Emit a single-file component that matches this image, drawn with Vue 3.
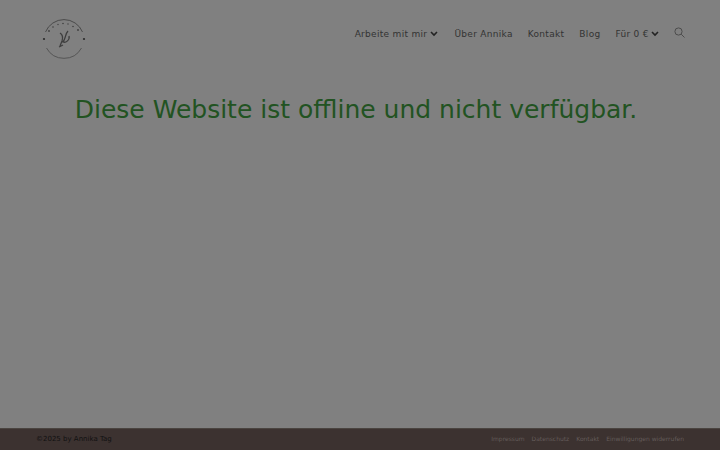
<template>
  <div class="page">
    <header class="top">
      <svg class="logo" width="44" height="44" viewBox="0 0 44 44">
        <path d="M3.5 15 A20 20 0 0 1 40.5 15" fill="none" stroke="#444" stroke-width="0.9" />
        <path d="M4.5 31 A20 20 0 0 0 39.5 31" fill="none" stroke="#505050" stroke-width="0.9" />
        <circle cx="2" cy="22" r="1.1" fill="#2a2a2a" />
        <circle cx="42" cy="22" r="1.1" fill="#2a2a2a" />
        <g fill="#3e3e3e">
          <circle cx="7" cy="14" r="0.9" />
          <circle cx="11" cy="10" r="0.8" />
          <circle cx="16" cy="7.5" r="0.7" />
          <circle cx="21" cy="6.5" r="0.8" />
          <circle cx="26" cy="7" r="0.7" />
          <circle cx="31" cy="9.5" r="0.8" />
          <circle cx="36" cy="13" r="0.9" />
        </g>
        <path d="M18 16 C21 18 21 21 20 24 L18 29 M26 14 C23 17 24 21 21 25 C24 26 28 23 27 19 M17 30 L21 28" fill="none" stroke="#3e3e3e" stroke-width="1.3" />
      </svg>
      <nav class="menu">
        <a class="first">Arbeite mit mir <svg width="8" height="6" viewBox="0 0 8 6"><path d="M1 1 L4 4 L7 1" fill="none" stroke="#222" stroke-width="1.6" /></svg></a>
        <a>Über Annika</a>
        <a>Kontakt</a>
        <a>Blog</a>
        <a>Für 0 € <svg width="8" height="6" viewBox="0 0 8 6"><path d="M1 1 L4 4 L7 1" fill="none" stroke="#222" stroke-width="1.6" /></svg></a>
        <svg class="search" width="11" height="11" viewBox="0 0 11 11"><circle cx="4.5" cy="4.5" r="3.6" fill="none" stroke="#4c4c4c" /><path d="M7.2 7.2 L10.5 10.5" stroke="#4c4c4c" /></svg>
      </nav>
    </header>
    <main class="content">
      <h1>Diese Website ist offline und nicht verfügbar.</h1>
    </main>
    <footer class="bottom">
      <span class="copy">©2025 by Annika Tag</span>
      <div class="links">
        <a>Impressum</a>
        <a>Datenschutz</a>
        <a>Kontakt</a>
        <a>Einwilligungen widerrufen</a>
      </div>
    </footer>
  </div>
</template>

<script setup>
</script>

<style>
html, body {
  margin: 0;
  background: #808080;
}
</style>

<style scoped>
.page {
  height: 450px;
  display: flex;
  flex-direction: column;
  font-family: "DejaVu Sans", sans-serif;
  background: #808080;
}
.top {
  height: 74px;
  display: flex;
  justify-content: space-between;
  padding: 0 35px 0 42px;
  box-sizing: border-box;
}
.logo {
  margin-top: 17px;
}
.menu {
  display: flex;
  align-items: center;
  gap: 15px;
  height: 67px;
  font-size: 9px;
  letter-spacing: 0.3px;
  color: #333;
  opacity: 0.99;
}
.menu a svg {
  margin-left: -1px;
}
.menu a.first {
  margin-right: 1px;
}
.menu a.first svg {
  margin-left: 0;
}
.search {
  margin-top: -3px;
}
.content {
  flex: 1;
  text-align: center;
}
h1 {
  margin: 21px 0 0 -8px;
  font-size: 25px;
  font-weight: 400;
  color: #215321;
  opacity: 0.99;
}
.bottom {
  height: 19px;
  background: #3c3230;
  border-top: 1px solid #4a4440;
  display: flex;
  justify-content: space-between;
  align-items: center;
  padding: 0 36px 2px;
}
.copy {
  font-size: 7px;
  color: #111;
  opacity: 0.99;
}
.links {
  display: flex;
  gap: 7px;
  font-size: 6px;
  color: #665e5c;
  opacity: 0.99;
}
</style>
